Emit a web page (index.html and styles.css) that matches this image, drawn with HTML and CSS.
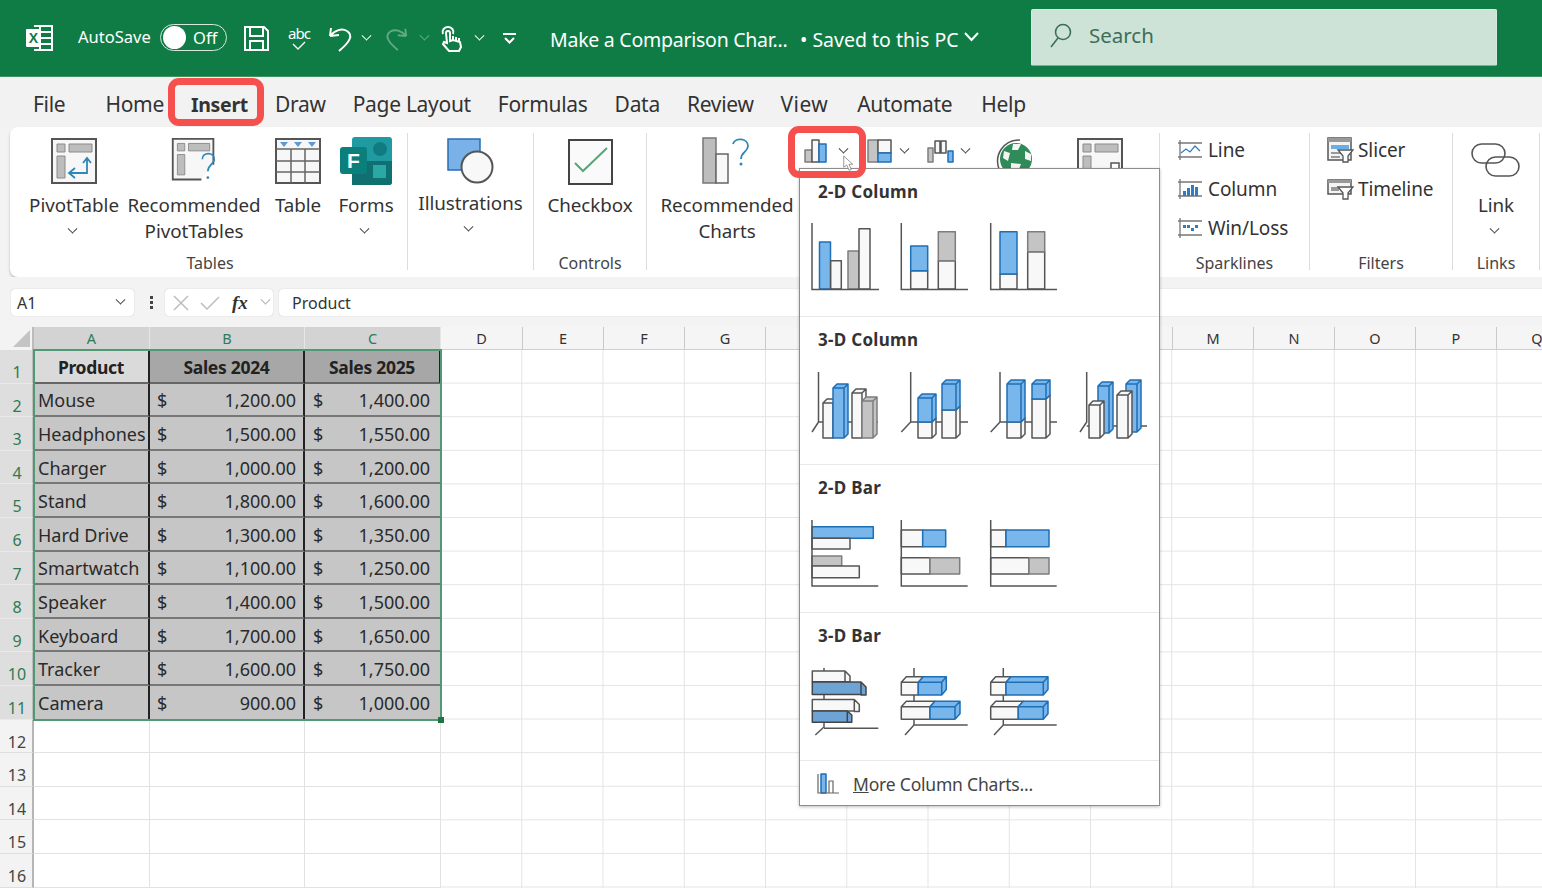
FILE: index.html
```html
<!DOCTYPE html>
<html lang="en">
<head>
<meta charset="utf-8">
<title>Make a Comparison Chart - Excel</title>
<link rel="stylesheet" href="styles.css">
</head>
<body>
<div class="app">
  <header class="titlebar">
    <svg class="t-logo" width="28" height="28" viewBox="0 0 28 28"><path class="w" d="M9 2h18v24H9M15 2v24M15 8h12M15 14h12M15 20h12"/><rect x="1" y="5" width="15" height="18" rx="1" fill="#fff"/><text x="8.5" y="19" class="logo-x">X</text></svg>
    <span class="autosave">AutoSave</span>
    <span class="toggle"><span class="knob"></span><span class="off">Off</span></span>
    <svg class="t-save" width="27" height="27" viewBox="0 0 27 27"><path class="w" d="M2 2h19l4 4v19H2zM7 2v9h13V2M7 25v-9h13v9"/></svg>
    <span class="t-abc"><span>abc</span><svg width="16" height="9" viewBox="0 0 16 9"><path class="w1" d="M2 3l5 5 7-7"/></svg></span>
    <svg class="t-undo" width="28" height="27" viewBox="0 0 28 27"><path class="w" d="M3 11L4 3M3 11l9-1M3 11C8 5 15 3 20 6c6 4 4 10-8 20"/></svg>
    <span class="chev white t-c1"></span>
    <svg class="t-redo" width="26" height="27" viewBox="0 0 28 27"><path class="w dim" d="M25 11L24 3M25 11l-9-1M25 11C20 5 13 3 8 6c-6 4-4 10 8 20"/></svg>
    <span class="chev white dim t-c2"></span>
    <svg class="t-touch" width="23" height="27" viewBox="0 0 23 27"><path class="w" d="M3 9a5 5 0 0 1 5-7 5 5 0 0 1 5 7M6 8a2 2 0 0 1 4 0v8l3-1 7 2 1 5-2 4H9l-6-7 1-2 3 1zM13 11v4M16 12v4M19 13v3"/></svg>
    <span class="chev white t-c3"></span>
    <svg class="t-more" width="13" height="11" viewBox="0 0 13 11"><path class="w" d="M0 1h13M2 5l4.500 4.500L11 5"/></svg>
    <span class="doc">Make a Comparison Char...</span>
    <span class="saved">&bull; Saved to this PC</span>
    <svg class="t-sv" width="15" height="10" viewBox="0 0 15 10"><path class="w" d="M1 1l6.500 7L14 1"/></svg>
    <div class="search">
      <svg width="26" height="26" viewBox="0 0 26 26"><circle cx="15" cy="10" r="7.500" class="s-ic"/><path class="s-ic" d="M10 16L3 25"/></svg>
      <span>Search</span>
    </div>
  </header>

  <nav class="tabs">
    <span class="tab tab-file">File</span><span class="tab tab-home">Home</span><span class="tab tab-insert">Insert</span><span class="tab">Draw</span><span class="tab">Page Layout</span><span class="tab">Formulas</span><span class="tab">Data</span><span class="tab">Review</span><span class="tab tab-view">View</span><span class="tab tab-auto">Automate</span><span class="tab">Help</span>
  </nav>

  <section class="ribbon">
    <div class="group g-tables">
      <div class="group-body">
        <div class="btn b-pivot">
          <svg class="ic" width="48" height="48" viewBox="0 0 48 48"><rect x="2" y="2" width="44" height="44" class="fr"/><path class="gf" d="M7 7h8v8H7zM19 7h23v8H19zM7 19h8v22H7z"/><path class="bs" d="M37 22v14H20M33 26l4-5 4 5M25 31l-6 5 6 5"/></svg>
          <span class="lb">PivotTable</span><span class="lb"><i class="chev"></i></span>
        </div>
        <div class="btn b-rec">
          <svg class="ic" width="50" height="52" viewBox="0 0 50 52"><path class="fr" d="M33 46H2V2h44v28"/><path class="gf" d="M7 7h8v8H7zM19 7h23v8H19zM7 19h8v22H7z"/><path class="bs" d="M34 24c0-8 13-8 13 0 0 5-7 6-7 13"/><circle cx="40" cy="44" r="1.500" fill="#2f86b8"/></svg>
          <span class="lb">Recommended</span><span class="lb">PivotTables</span>
        </div>
        <div class="btn b-table">
          <svg class="ic" width="48" height="48" viewBox="0 0 48 48"><rect x="2" y="2" width="44" height="44" class="fr"/><path class="ln" d="M2 12h44M2 24h44M2 35h44M17 12v34M31 12v34"/><path fill="#5b9bd5" d="M6 5h8l-4 5zM20 5h8l-4 5zM34 5h8l-4 5z"/></svg>
          <span class="lb">Table</span>
        </div>
        <div class="btn b-forms">
          <svg class="ic" width="52" height="48" viewBox="0 0 52 48"><rect x="12" y="0" width="40" height="48" rx="3" fill="#1e9aa0"/><path d="M12 24h40v21a3 3 0 0 1-3 3H12z" fill="#0f6f71"/><circle cx="40" cy="12" r="7" fill="#107c82"/><rect x="33" y="28" width="13" height="13" fill="#2aa8a4"/><rect x="0" y="10" width="27" height="27" rx="3" fill="#0b7f7b"/><text x="7" y="31" class="forms-f">F</text></svg>
          <span class="lb">Forms</span><span class="lb"><i class="chev"></i></span>
        </div>
      </div>
      <div class="group-label">Tables</div>
    </div>

    <div class="group g-illus">
      <div class="group-body center">
        <div class="btn b-illus">
          <svg class="ic" width="50" height="48" viewBox="0 0 50 48"><rect x="2" y="2" width="32" height="31" fill="#79b1e8" stroke="#2a6eb0" stroke-width="1.500"/><circle cx="31" cy="30" r="15.500" fill="#f8f8f8" stroke="#555" stroke-width="2"/></svg>
          <span class="lb">Illustrations</span><span class="lb"><i class="chev"></i></span>
        </div>
      </div>
    </div>

    <div class="group g-ctrl">
      <div class="group-body center">
        <div class="btn">
          <svg class="ic" width="48" height="48" viewBox="0 0 48 48"><rect x="3" y="3" width="43" height="44" fill="#fafafa" stroke="#444" stroke-width="2"/><path d="M9 26l8 8L41 11" fill="none" stroke="#55a678" stroke-width="2"/></svg>
          <span class="lb">Checkbox</span>
        </div>
      </div>
      <div class="group-label">Controls</div>
    </div>

    <div class="group g-charts">
      <div class="group-body">
        <div class="btn b-recchart">
          <svg class="ic" width="50" height="48" viewBox="0 0 50 48"><rect x="1" y="1" width="13" height="45" fill="#bdbdbd" stroke="#777" stroke-width="1.500"/><rect x="14" y="17" width="12" height="29" fill="#f8f8f8" stroke="#666" stroke-width="1.500"/><path class="bs" d="M31 7c2-7 15-6 15 2 0 6-7 6-7 13"/><circle cx="39" cy="27" r="1.500" fill="#2f86b8"/></svg>
          <span class="lb">Recommended</span><span class="lb">Charts</span>
        </div>
        <div class="mini-row">
          <div class="mini m-col">
            <svg width="26" height="26" viewBox="0 0 26 26"><rect x="1" y="12" width="7" height="12" class="gr"/><rect x="8" y="2" width="7" height="22" class="wh"/><rect x="15" y="6" width="7" height="18" class="bl"/></svg>
            <i class="chev"></i>
          </div>
          <div class="mini m-hier">
            <svg width="26" height="26" viewBox="0 0 26 26"><rect x="1" y="2" width="10" height="22" class="gr"/><rect x="11" y="2" width="13" height="13" class="wh"/><rect x="11" y="15" width="13" height="9" class="bl"/></svg>
            <i class="chev"></i>
          </div>
          <div class="mini m-water">
            <svg width="28" height="26" viewBox="0 0 28 26"><rect x="1" y="10" width="5" height="14" class="gr"/><path class="wh" d="M8 3h5v12H8zM14 3h5v12h-5z"/><rect x="21" y="13" width="5" height="11" class="bl"/></svg>
            <i class="chev"></i>
          </div>
          <div class="mini m-globe">
            <svg width="40" height="40" viewBox="0 0 40 40"><path d="M4 32C-1 18 8 3 25 3" fill="none" stroke="#555" stroke-width="1.500"/><circle cx="21" cy="22" r="16" fill="#2f8b57"/><path fill="#f4f4f4" d="M18 7h8l-3 6h-6zM30 14l6 3v7l-6-2zM9 14l6 2-2 8-5-3zM16 26l10 1-2 5-8-1z"/></svg>
          </div>
          <div class="mini m-pchart">
            <svg width="48" height="42" viewBox="0 0 48 42"><rect x="1" y="2" width="44" height="40" class="fr"/><path class="gf" d="M6 7h8v8H6zM18 7h23v8H18zM6 19h8v22H6z"/><path d="M34 32v-6h8v6" fill="#fff" stroke="#555" stroke-width="1.500"/></svg>
          </div>
        </div>
      </div>
    </div>

    <div class="group g-spark">
      <div class="group-body col">
        <div class="row-btn">
          <svg width="26" height="22" viewBox="0 0 26 22"><path class="ln2" d="M3 1v20M1 4h24M1 18h24"/><path d="M4 14l5-4 4 3 5-6 5 5" fill="none" stroke="#2f7dc0" stroke-width="1.200"/></svg>
          <span>Line</span>
        </div>
        <div class="row-btn">
          <svg width="26" height="22" viewBox="0 0 26 22"><path class="ln2" d="M3 1v20M1 4h24M1 18h24"/><path fill="#2f7dc0" d="M6 13h3v5H6zM10 10h3v8h-3zM14 7h3v11h-3zM18 9h3v9h-3z"/></svg>
          <span>Column</span>
        </div>
        <div class="row-btn">
          <svg width="26" height="22" viewBox="0 0 26 22"><path class="ln2" d="M3 1v20M1 4h24M1 18h24"/><path fill="#2f7dc0" d="M6 8h3v3H6zM10 8h3v3h-3zM14 11h3v3h-3zM18 8h3v3h-3z"/></svg>
          <span>Win/Loss</span>
        </div>
      </div>
      <div class="group-label">Sparklines</div>
    </div>

    <div class="group g-filter">
      <div class="group-body col">
        <div class="row-btn">
          <svg width="27" height="26" viewBox="0 0 27 26"><rect x="1" y="1" width="23" height="22" fill="#f4f4f4" stroke="#555" stroke-width="1.500"/><path fill="#999" d="M1 1h23v4H1zM4 15h11v2H4zM4 19h9v2H4z"/><path fill="#6aaee6" d="M4 8h18v4H4z"/><path d="M11 13h15l-5 6v6h-5v-6z" fill="#fff" stroke="#555" stroke-width="1.300"/></svg>
          <span>Slicer</span>
        </div>
        <div class="row-btn">
          <svg width="27" height="22" viewBox="0 0 27 22"><rect x="1" y="2" width="23" height="14" fill="#f4f4f4" stroke="#555" stroke-width="1.500"/><path fill="#999" d="M1 2h23v3H1zM4 9h8v4H4z"/><path d="M11 9h15l-5 6v6h-5v-6z" fill="#fff" stroke="#555" stroke-width="1.300"/></svg>
          <span>Timeline</span>
        </div>
      </div>
      <div class="group-label">Filters</div>
    </div>

    <div class="group g-links">
      <div class="group-body center">
        <div class="btn">
          <svg class="ic" width="52" height="48" viewBox="0 0 52 48"><g transform="translate(0 5)"><rect x="2" y="2" width="33" height="19" rx="9.500" class="lk"/><rect x="16" y="15" width="33" height="19" rx="9.500" class="lk"/></g></svg>
          <span class="lb">Link</span><span class="lb"><i class="chev"></i></span>
        </div>
      </div>
      <div class="group-label">Links</div>
    </div>
    <div class="group g-end"></div>
  </section>

  <div class="formula">
    <div class="namebox"><span>A1</span><i class="chev"></i></div>
    <div class="dots"><i></i><i></i><i></i></div>
    <div class="fxbox">
      <svg width="18" height="18" viewBox="0 0 18 18"><path d="M2 2l14 14M16 2L2 16" class="fxl"/></svg>
      <svg width="22" height="16" viewBox="0 0 22 16"><path d="M2 8l6 6L20 2" class="fxl"/></svg>
      <span class="fx">fx</span><i class="chev light"></i>
    </div>
    <div class="input">Product</div>
  </div>

  <main class="sheet">
    <div class="corner"><i></i></div>
    <div class="ch sel">A</div><div class="ch sel">B</div><div class="ch sel">C</div>
    <div class="ch">D</div><div class="ch">E</div><div class="ch">F</div><div class="ch">G</div><div class="ch"></div><div class="ch"></div><div class="ch"></div><div class="ch"></div><div class="ch"></div><div class="ch">M</div><div class="ch">N</div><div class="ch">O</div><div class="ch">P</div><div class="ch">Q</div>

    <div class="blank"></div>

    <div class="rh sel">1</div><div class="cell hd hd-a">Product</div><div class="cell hd hd-b">Sales 2024</div><div class="cell hd hd-b">Sales 2025</div>
    <div class="rh sel">2</div><div class="cell tx">Mouse</div><div class="cell num b"><span>$</span><span>1,200.00</span></div><div class="cell num c"><span>$</span><span>1,400.00</span></div>
    <div class="rh sel">3</div><div class="cell tx">Headphones</div><div class="cell num b"><span>$</span><span>1,500.00</span></div><div class="cell num c"><span>$</span><span>1,550.00</span></div>
    <div class="rh sel">4</div><div class="cell tx">Charger</div><div class="cell num b"><span>$</span><span>1,000.00</span></div><div class="cell num c"><span>$</span><span>1,200.00</span></div>
    <div class="rh sel">5</div><div class="cell tx">Stand</div><div class="cell num b"><span>$</span><span>1,800.00</span></div><div class="cell num c"><span>$</span><span>1,600.00</span></div>
    <div class="rh sel">6</div><div class="cell tx">Hard Drive</div><div class="cell num b"><span>$</span><span>1,300.00</span></div><div class="cell num c"><span>$</span><span>1,350.00</span></div>
    <div class="rh sel">7</div><div class="cell tx">Smartwatch</div><div class="cell num b"><span>$</span><span>1,100.00</span></div><div class="cell num c"><span>$</span><span>1,250.00</span></div>
    <div class="rh sel">8</div><div class="cell tx">Speaker</div><div class="cell num b"><span>$</span><span>1,400.00</span></div><div class="cell num c"><span>$</span><span>1,500.00</span></div>
    <div class="rh sel">9</div><div class="cell tx">Keyboard</div><div class="cell num b"><span>$</span><span>1,700.00</span></div><div class="cell num c"><span>$</span><span>1,650.00</span></div>
    <div class="rh sel">10</div><div class="cell tx">Tracker</div><div class="cell num b"><span>$</span><span>1,600.00</span></div><div class="cell num c"><span>$</span><span>1,750.00</span></div>
    <div class="rh sel">11</div><div class="cell tx last">Camera</div><div class="cell num b last"><span>$</span><span>900.00</span></div><div class="cell num c last"><span>$</span><span>1,000.00</span></div>
    <div class="rh">12</div><div class="e"></div><div class="e"></div><div class="e"></div>
    <div class="rh">13</div><div class="e"></div><div class="e"></div><div class="e"></div>
    <div class="rh">14</div><div class="e"></div><div class="e"></div><div class="e"></div>
    <div class="rh">15</div><div class="e"></div><div class="e"></div><div class="e"></div>
    <div class="rh">16</div><div class="e"></div><div class="e"></div><div class="e"></div>

    <div class="selection"><i class="handle"></i></div>
  </main>

  <aside class="dropdown">
    <section class="dd-sec">
      <h3>2-D Column</h3>
      <div class="gallery">
        <svg class="thumb" viewBox="0 0 70 70"><rect x="8.500" y="20" width="11" height="47" class="bl"/><rect x="19.700" y="38.700" width="10.600" height="28.300" class="wh"/><rect x="37" y="29" width="11" height="38" class="gr"/><rect x="48" y="6.700" width="11" height="60.300" class="wh"/><path class="ax" d="M1 1v66.500H68"/></svg>
        <svg class="thumb" viewBox="0 0 70 70"><rect x="10.700" y="48.700" width="17" height="18.300" class="wh"/><rect x="10.700" y="24" width="17" height="24.700" class="bl"/><rect x="38.300" y="38.700" width="17" height="28.300" class="wh"/><rect x="38.300" y="9.700" width="17" height="29" class="gr"/><path class="ax" d="M1.300 1v66.500H68"/></svg>
        <svg class="thumb" viewBox="0 0 70 70"><rect x="11" y="52" width="17" height="15" class="wh"/><rect x="11" y="9.700" width="17" height="42.300" class="bl"/><rect x="38.700" y="29.700" width="17" height="37.300" class="wh"/><rect x="38.700" y="9.700" width="17" height="20" class="gr"/><path class="ax" d="M1.700 1v66.500H68"/></svg>
      </div>
    </section>
    <section class="dd-sec">
      <h3>3-D Column</h3>
      <div class="gallery">
        <svg class="thumb" viewBox="0 0 70 70"><path class="ax" d="M7.500 2v50L1 62M7.500 52H67"/><path class="wh" d="M12 33h10v35H12zM12 33l4-4h10l-4 4zM22 33l4-4v35l-4 4z"/><path class="bl" d="M22 18h11v50H22zM22 18l4-4h11l-4 4zM33 18l4-4v50l-4 4z"/><path class="wh" d="M41 23h10v45H41zM41 23l4-4h10l-4 4zM51 23l4-4v8"/><path class="gr" d="M51 31h11v37H51zM51 31l4-4h11l-4 4zM62 31l4-4v37l-4 4z"/></svg>
        <svg class="thumb" viewBox="0 0 70 70"><path class="ax" d="M10.700 2v50L1.300 62M10.700 52H68"/><path class="wh" d="M18 52h14v16H18zM32 52l4-4v16l-4 4z"/><path class="bl" d="M18 28h14v24H18zM18 28l4-4h14l-4 4zM32 28l4-4v24l-4 4z"/><path class="wh" d="M42 40h14v28H42zM56 40l4-4v28l-4 4z"/><path class="bl" d="M42 14h14v26H42zM42 14l4-4h14l-4 4zM56 14l4-4v26l-4 4z"/></svg>
        <svg class="thumb" viewBox="0 0 70 70"><path class="ax" d="M11 2v50L1.700 62M11 52H68"/><path class="wh" d="M18 52h14v16H18zM32 52l4-4v16l-4 4z"/><path class="bl" d="M18 14h14v38H18zM18 14l4-4h14l-4 4zM32 14l4-4v38l-4 4z"/><path class="wh" d="M43 29h14v39H43zM57 29l4-4v39l-4 4z"/><path class="bl" d="M43 14h14v15H43zM43 14l4-4h14l-4 4zM57 14l4-4v15l-4 4z"/></svg>
        <svg class="thumb" viewBox="0 0 70 70"><path class="ax" d="M8.700 2v50L2 62M8.700 56H69"/><path class="bl" d="M20 16h11v47H20zM20 16l4-4h11l-4 4zM31 16l4-4v47l-4 4z"/><path class="bl" d="M48 14h11v48H48zM48 14l4-4h11l-4 4zM59 14l4-4v48l-4 4z"/><path class="wh" d="M11 35h11v33H11zM11 35l4-4h11l-4 4zM22 35l4-4v33l-4 4z"/><path class="wh" d="M39 25h11v43H39zM39 25l4-4h11l-4 4zM50 25l4-4v43l-4 4z"/></svg>
      </div>
    </section>
    <section class="dd-sec bar">
      <h3>2-D Bar</h3>
      <div class="gallery">
        <svg class="thumb" viewBox="0 0 70 70"><rect x="1" y="6.700" width="61.300" height="11.600" class="bl"/><rect x="1" y="18.300" width="38" height="10.700" class="wh"/><rect x="1" y="36" width="29.700" height="10" class="gr"/><rect x="1" y="46" width="47.300" height="11.700" class="wh"/><path class="ax" d="M1 0v66H67.300"/></svg>
        <svg class="thumb" viewBox="0 0 70 70"><rect x="1.300" y="10" width="21.400" height="16.700" class="wh"/><rect x="22.700" y="10" width="23" height="16.700" class="bl"/><rect x="1.300" y="37.700" width="28.700" height="16.300" class="wh"/><rect x="30" y="37.700" width="29.700" height="16.300" class="gr"/><path class="ax" d="M1.300 0v66H67.700"/></svg>
        <svg class="thumb" viewBox="0 0 70 70"><rect x="1.700" y="10" width="15.300" height="16.700" class="wh"/><rect x="17" y="10" width="43" height="16.700" class="bl"/><rect x="1.700" y="37.700" width="38.300" height="16.300" class="wh"/><rect x="40" y="37.700" width="20" height="16.300" class="gr"/><path class="ax" d="M1.700 0v66H67.700"/></svg>
      </div>
    </section>
    <section class="dd-sec bar">
      <h3>3-D Bar</h3>
      <div class="gallery">
        <svg class="thumb" viewBox="0 0 70 70"><path class="ax" d="M13 0v59L4.300 67M13 60.300H67.300"/><path class="wh" d="M1.300 3H34v10.700H1.300zM34 3l5 5v6h-5z"/><path class="bd" d="M1.300 14H50v12.500H1.300zM50 14l5 5v8h-5z"/><path class="wh" d="M1.300 31.500H43.300V43H1.300zM43.300 31.500l5 5v7h-5z"/><path class="bd" d="M1.300 43H36.300v11.300H1.300zM36.300 43l4.500 4v7.300h-4.500z"/></svg>
        <svg class="thumb" viewBox="0 0 70 70"><path class="ax" d="M14 0v57L5 67M14 57H67.700"/><path class="wh" d="M1.300 14.300h17V27h-17zM1.300 14.300l5-5.500h17l-5 5.500z"/><path class="bl" d="M18.300 14.300h23.400V27H18.300zM18.300 14.300l5-5.500h23l-4.600 5.500zM41.700 14.300l4.600-5.500v12.700L41.700 27z"/><path class="wh" d="M1.300 38.700H30v12.600H1.300zM1.300 38.700l5-5.500H35l-5 5.500z"/><path class="bl" d="M30 38.700h25v12.600H30zM30 38.700l5-5.500h25l-5 5.500zM55 38.700l5-5.500v12.600l-5 5.500z"/></svg>
        <svg class="thumb" viewBox="0 0 70 70"><path class="ax" d="M14.300 0v57L5 67M14.300 57H67.700"/><path class="wh" d="M1.700 14.300H17V27H1.700zM1.700 14.300l5-5.500H22l-5 5.500z"/><path class="bl" d="M17 14.300h37.300V27H17zM17 14.300l5-5.500h37l-4.700 5.500zM54.300 14.300L59 8.800v12.700L54.300 27z"/><path class="wh" d="M1.700 38.700h27.600v12.600H1.700zM1.700 38.700l5-5.500h27.600l-5 5.500z"/><path class="bl" d="M29.300 38.700h25v12.600h-25zM29.300 38.700l5-5.500H59l-4.700 5.500zM54.300 38.700l4.700-5.500v12.600l-4.700 5.500z"/></svg>
      </div>
    </section>
    <div class="dd-more">
      <svg width="24" height="22" viewBox="0 0 24 22"><rect x="5" y="1" width="5" height="19" class="bl"/><path class="ln3" d="M2 1v19h21M13 20V8h4v12"/></svg>
      <span><u>M</u>ore Column Charts...</span>
    </div>
  </aside>

  <div class="mark mark-insert"></div>
  <div class="mark mark-chart"></div>
  <svg class="cursor" width="12" height="17" viewBox="0 0 16 22"><path d="M1 1v15l4-3 3 7 3-1-3-7h5z" fill="#fff" stroke="#777" stroke-width="1"/></svg>
</div>
</body>
</html>
```
FILE: styles.css
```css
* { box-sizing: border-box; }
html, body { margin: 0; padding: 0; }
body { font-family: "Noto Sans", "Open Sans", sans-serif; color: #333; background: #f3f3f3; }
.app { position: relative; width: 1542px; height: 888px; overflow: hidden; display: flex; flex-direction: column; }

.w { fill: none; stroke: #fff; stroke-width: 2; }
.w1 { fill: none; stroke: #fff; stroke-width: 1.3; }
.dim { opacity: .35; }
.chev { display: inline-block; width: 7px; height: 7px; border-right: 1.7px solid #444; border-bottom: 1.7px solid #444; transform: rotate(45deg) translate(-2px, -2px); }
.chev.white { border-color: #fff; }
.chev.light { border-color: #aaa; }

/* Title bar */
.titlebar { flex: none; height: 77px; background: #107c45; color: #fff; display: flex; align-items: center; padding-left: 25px; border-bottom: 1px solid #3d9464; }
.logo-x { font: 700 14px "Liberation Sans", sans-serif; fill: #107c45; text-anchor: middle; }
.autosave { margin-left: 25px; font-size: 16.500px; width: 82px; white-space: nowrap; margin-top: -3px; }
.toggle { width: 67px; height: 27px; border: 1.500px solid #d5e8dc; border-radius: 14px; display: flex; align-items: center; padding-left: 2px; margin-top: -1px; }
.knob { width: 23px; height: 23px; background: #fff; border-radius: 50%; }
.off { margin-left: 7px; font-size: 16.500px; }
.t-save { margin-left: 16px; }
.t-abc { margin-left: 17px; width: 24px; display: flex; flex-direction: column; align-items: center; font-size: 15px; line-height: 15px; letter-spacing: -1px; }
.t-undo { margin-left: 16px; }
.t-c1 { margin-left: 8px; }
.t-redo { margin-left: 13px; }
.t-c2 { margin-left: 12px; }
.t-touch { margin-left: 12px; }
.t-c3 { margin-left: 13px; }
.t-more { margin-left: 20px; }
.doc { margin-left: 34px; width: 250px; font-size: 19.500px; white-space: nowrap; letter-spacing: -.25px; position: relative; top: 1px; }
.saved { font-size: 19.500px; width: 165px; white-space: nowrap; position: relative; top: 1px; }
.t-sv { margin-left: -1px; position: relative; top: -1px; }
.search { margin-left: 52px; margin-top: -2px; width: 466px; height: 57px; background: #cde3d8; border-radius: 2px; display: flex; align-items: center; gap: 15px; padding: 0 0 4px 16px; color: #3e6e56; font-size: 20.500px; border: 1px solid #d8e9e0; border-bottom-color: #7fae96; }
.s-ic { fill: none; stroke: #3e6e56; stroke-width: 1.600; }

/* Tabs */
.tabs { flex: none; height: 50px; display: flex; align-items: center; padding: 4px 0 0 33px; font-size: 21px; gap: 27px; letter-spacing: -.3px; color: #333; background: #f2f2f2; }
.tab { white-space: nowrap; }
.tab-file { margin-right: 13px; }
.tab-insert { font-weight: 700; font-size: 19.500px; }
.tab-view { letter-spacing: .4px; margin-right: 2px; }
.tab-auto { margin-right: 2px; }

/* Ribbon */
.ribbon { flex: none; height: 150px; margin-left: 10px; background: #fff; border-radius: 8px 0 0 8px; box-shadow: 0 2px 3px rgba(0,0,0,.22); display: flex; padding: 6px 0 7px; }
.group { height: 137px; border-right: 1.500px solid #dcdcdc; display: flex; flex-direction: column; position: relative; flex: none; }
.group-body { display: flex; padding-top: 4px; flex: 1; min-height: 0; }
.group-body.center { justify-content: center; }
.group-body.col { flex-direction: column; padding: 0 0 0 17px; margin-top: -3px; }
.group-label { height: 14px; line-height: 14px; margin-bottom: 0; text-align: center; font-size: 16px; color: #444; }
.g-tables { width: 398px; padding-left: 3px; }
.g-tables .group-body { padding-left: 7px; }
.g-illus { width: 126px; }
.b-illus .lb { position: relative; top: -2px; }
.g-ctrl { width: 113px; }
.g-charts { width: 513px; }
.g-spark { width: 150px; }
.g-filter { width: 143px; }
.g-links { width: 87px; }
.g-end { width: 2px; border-right: 0; }
.btn { display: flex; flex-direction: column; align-items: center; font-size: 18.800px; color: #333; white-space: nowrap; }
.ic { flex: none; height: 48px; margin-bottom: 7px; overflow: visible; }
.lb { height: 26px; line-height: 26px; display: block; letter-spacing: -.05px; }
.lb .chev { position: relative; top: -3px; left: -2px; }
.b-pivot { width: 108px; }
.b-rec { width: 132px; }
.b-table { width: 76px; }
.b-forms { width: 60px; }
.b-recchart { width: 140px; margin-left: 10px; }
.fr { fill: #f7f7f7; stroke: #555; stroke-width: 2; }
.gf { fill: #bdbdbd; stroke: #8a8a8a; stroke-width: 1; }
.bs { fill: none; stroke: #2f86b8; stroke-width: 1.800; }
.ln { fill: none; stroke: #666; stroke-width: 1.500; }
.ln2 { fill: none; stroke: #777; stroke-width: 1.300; }
.ln3 { fill: none; stroke: #666; stroke-width: 1.200; }
.lk { fill: none; stroke: #555; stroke-width: 1.600; }
.forms-f { font: 700 21px "Liberation Sans", sans-serif; fill: #fff; }
.mini-row { display: flex; align-items: flex-start; height: 36px; overflow: hidden; margin-left: 2px; margin-top: -3px; }
.mini { display: flex; align-items: center; height: 34px; flex: none; }
.mini svg { flex: none; }
.m-col { width: 68px; padding-left: 5px; gap: 10px; }
.m-hier { width: 60px; gap: 8px; }
.m-water { width: 68px; gap: 7px; }
.m-globe { width: 82px; height: 42px; align-items: flex-start; padding-top: 3px; }
.m-pchart { height: 44px; align-items: flex-start; padding-top: 3px; }
.row-btn { height: 39px; display: flex; align-items: center; gap: 5px; font-size: 19px; color: #333; letter-spacing: -.1px; white-space: nowrap; }
.g-filter .row-btn { gap: 4px; }

/* Formula bar */
.formula { flex: none; height: 43px; display: flex; align-items: flex-start; padding: 12px 0 0 11px; background: #f3f3f3; }
.namebox, .fxbox, .input { height: 27px; background: #fff; border-radius: 4px; box-shadow: 0 0 1px rgba(0,0,0,.3); display: flex; align-items: center; font-size: 16px; }
.namebox { width: 123px; justify-content: space-between; padding: 0 10px 0 6px; }
.dots { width: 31px; height: 27px; display: flex; flex-direction: column; align-items: center; justify-content: center; gap: 2px; padding-left: 3px; }
.dots i { width: 3px; height: 3px; background: #444; }
.fxbox { width: 108px; padding-left: 7px; gap: 9px; }
.fxl { fill: none; stroke: #bdbdbd; stroke-width: 1.500; }
.fx { font: italic 700 19px "Liberation Serif", serif; color: #333; margin-left: 2px; }
.fxbox .chev { margin-left: 5px; }
.input { flex: 1; margin-left: 6px; padding-left: 13px; border-radius: 4px 0 0 4px; }

/* Sheet */
.sheet { flex: none; position: relative; display: grid; padding-top: 7px; background: #fff; background-image: linear-gradient(#f3f3f3 7px, transparent 7px); grid-template-columns: 34px 116px 155px 136px 82px 81px 81px 81px 82px 81px 81px 81px 82px 81px 81px 81px 81px 81px; grid-template-rows: 23px repeat(16, 33.600px); }
.corner { background: #f3f3f3; position: relative; border-right: 2px solid #bbb; }
.corner i { position: absolute; right: 2px; bottom: 3px; width: 17px; height: 17px; background: #c4c4c4; clip-path: polygon(100% 0, 100% 100%, 0 100%); }
.ch { display: flex; align-items: center; justify-content: center; font-size: 14.500px; color: #333; background: #f5f5f5; border-right: 1px solid #c9c9c9; border-bottom: 1px solid #d0d0d0; }
.ch.sel { background: #d3d3d3; color: #2e7a52; border-right-color: #e6e6e6; }
.rh { display: flex; justify-content: center; padding: 12px 0 0 2px; font-size: 16px; line-height: 20px; color: #444; background: #f3f3f3; border-right: 2px solid #b5b5b5; border-bottom: 1px solid #dedede; }
.rh.sel { background: #dedede; color: #2e7a52; border-right-color: #bdbdbd; border-bottom-color: #e9e9e9; }
.cell { display: flex; align-items: center; padding-top: 2px; font-size: 18px; color: #2a2a2a; background: #c6c6c6; border-bottom: 2px solid #777; white-space: nowrap; min-width: 0; }
.cell.last { border-bottom: 0; padding-top: 0; }
.tx { padding-left: 4px; border-right: 2px solid #222; }
.hd { font-weight: 700; justify-content: center; font-size: 17.500px; letter-spacing: -.3px; color: #222; border-right: 2px solid #222; border-bottom-color: #666; }
.hd-a { background: #dadada; }
.hd-b { background: #a7a7a7; }
.num { justify-content: space-between; }
.num.b { padding-left: 7px; padding-right: 7px; border-right: 2px solid #222; }
.num.c { padding-left: 8px; padding-right: 11px; }
.e { border-right: 1px solid #e2e2e2; border-bottom: 1px solid #e2e2e2; background: #fff; }
.blank { grid-column: 5 / -1; grid-row: 2 / -1; background: linear-gradient(to top, #e4e4e4 1px, transparent 1px) 0 0 / 100% 33.600px, linear-gradient(to left, #e4e4e4 1px, transparent 1px) 0 0 / 81.250px 100%; }
.selection { position: absolute; grid-column: 2 / 5; grid-row: 2 / 13; inset: -1px; border: 2px solid #4f9a72; z-index: 2; pointer-events: none; }
.handle { position: absolute; right: -4px; bottom: -4px; width: 6px; height: 6px; background: #217346; }

/* Dropdown */
.dropdown { position: absolute; left: 799px; top: 168px; width: 361px; height: 638px; background: #fff; border: 1px solid #8d8d8d; border-left-width: 1.500px; box-shadow: 0 1px 3px rgba(0,0,0,.25); z-index: 3; }
.dd-sec { height: 148px; border-bottom: 1.500px solid #e8e8e8; padding: 10px 0 0 18px; }
.dd-sec h3 { margin: 0; height: 26px; line-height: 26px; font-size: 17px; font-weight: 700; color: #333; letter-spacing: .3px; }
.gallery { display: flex; gap: 19px; margin: 17px 0 0 -7px; }
.dd-sec.bar .gallery { margin-top: 19px; }
.thumb { width: 70px; height: 70px; flex: none; overflow: visible; }
.bl, .wh, .gr, .bd { stroke-width: 1.500; stroke-linejoin: round; }
.bl { fill: #79b6ec; stroke: #1f6fb5; }
.bd { fill: #6ea3d6; stroke: #444; }
.wh { fill: #f8f8f8; stroke: #555; }
.gr { fill: #c4c4c4; stroke: #7d7d7d; }
.ax { fill: none; stroke: #555; stroke-width: 1.500; }
.dd-more { display: flex; align-items: center; gap: 13px; height: 45px; padding-left: 16px; font-size: 17.500px; letter-spacing: -.2px; color: #444; }

/* Callouts */
.mark { position: absolute; border: 7px solid #f5504d; border-radius: 11px; z-index: 4; }
.mark-insert { left: 168px; top: 78px; width: 96px; height: 48px; }
.mark-chart { left: 788px; top: 126px; width: 78px; height: 52px; }
.cursor { position: absolute; left: 843px; top: 155px; z-index: 5; }
```
